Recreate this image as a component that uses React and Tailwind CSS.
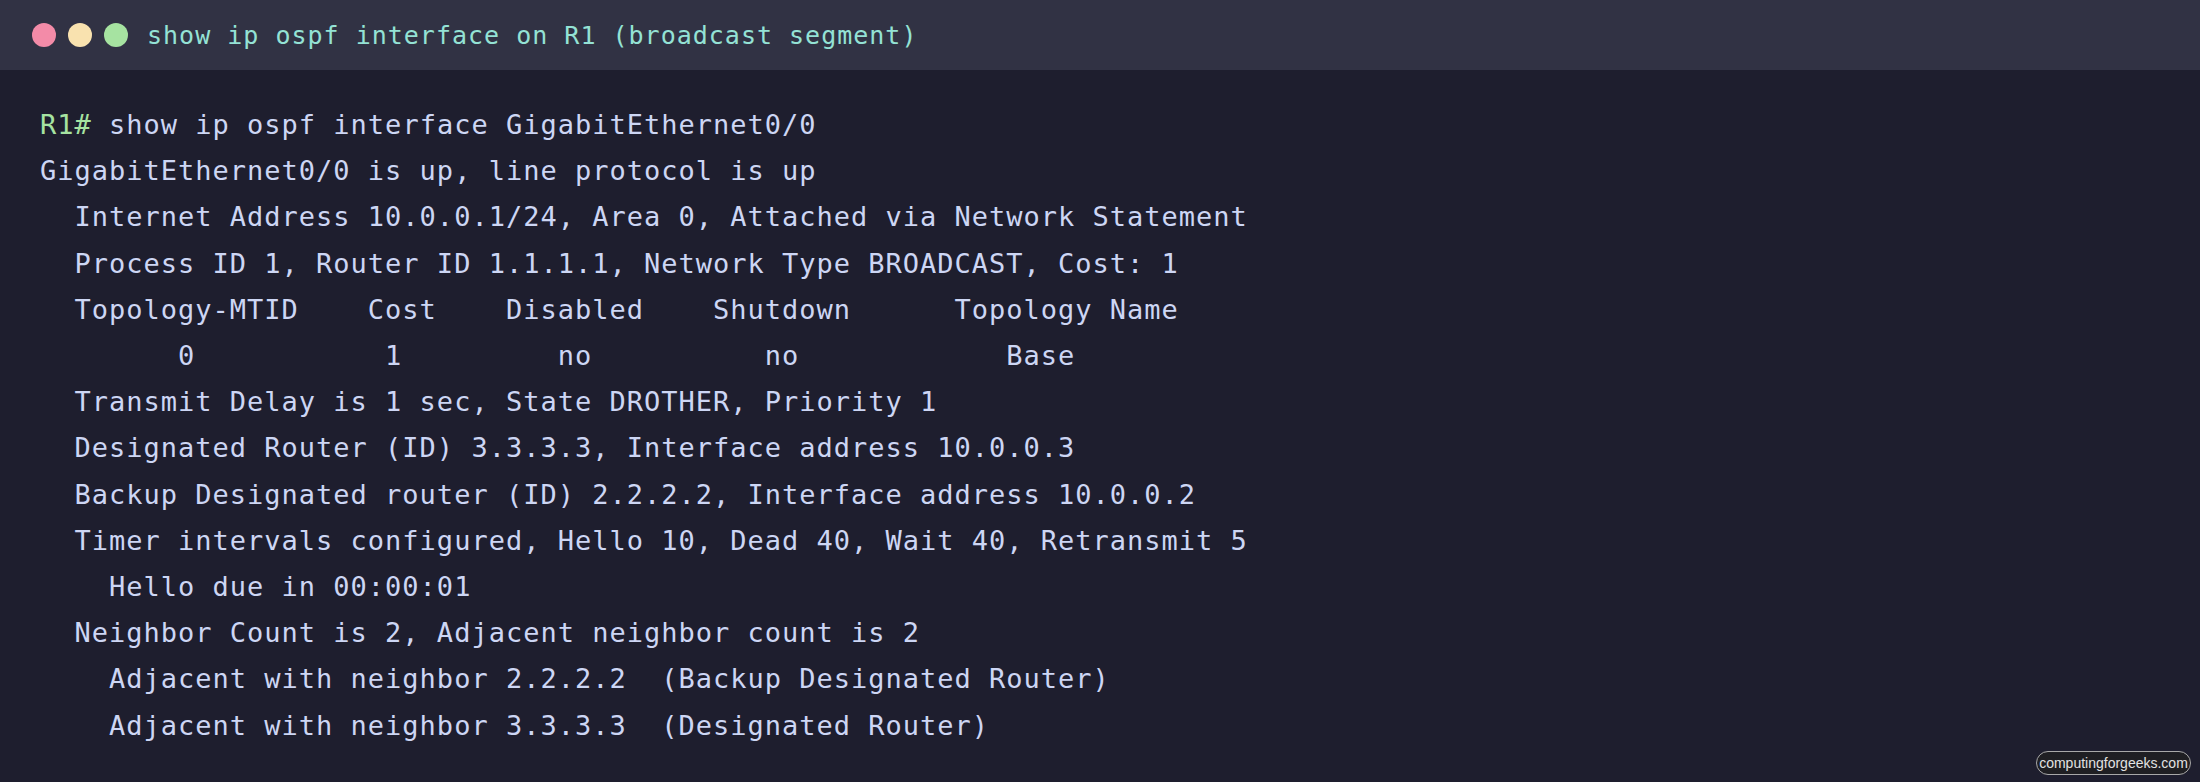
import React from 'react';

const lines = [
  'GigabitEthernet0/0 is up, line protocol is up',
  '  Internet Address 10.0.0.1/24, Area 0, Attached via Network Statement',
  '  Process ID 1, Router ID 1.1.1.1, Network Type BROADCAST, Cost: 1',
  '  Topology-MTID    Cost    Disabled    Shutdown      Topology Name',
  '        0           1         no          no            Base',
  '  Transmit Delay is 1 sec, State DROTHER, Priority 1',
  '  Designated Router (ID) 3.3.3.3, Interface address 10.0.0.3',
  '  Backup Designated router (ID) 2.2.2.2, Interface address 10.0.0.2',
  '  Timer intervals configured, Hello 10, Dead 40, Wait 40, Retransmit 5',
  '    Hello due in 00:00:01',
  '  Neighbor Count is 2, Adjacent neighbor count is 2',
  '    Adjacent with neighbor 2.2.2.2  (Backup Designated Router)',
  '    Adjacent with neighbor 3.3.3.3  (Designated Router)',
];

export default function App() {
  return (
    <div className="relative w-[2200px] h-[782px] bg-[#1e1e2e] overflow-hidden font-['DejaVu_Sans_Mono','Liberation_Mono',monospace]">
      {/* window title bar */}
      <div className="h-[70px] bg-[#313244] flex items-center pl-[32px]">
        <div className="flex items-center gap-[12px]">
          <span className="w-[24px] h-[24px] rounded-full bg-[#f38ba8]"></span>
          <span className="w-[24px] h-[24px] rounded-full bg-[#f9e2af]"></span>
          <span className="w-[24px] h-[24px] rounded-full bg-[#a6e3a1]"></span>
        </div>
        <span className="ml-[19px] text-[25px] tracking-[1px] text-[#94e2d5] leading-none">
          show ip ospf interface on R1 (broadcast segment)
        </span>
      </div>

      {/* terminal output */}
      <div className="pt-[32px] pl-[40px] text-[27px] tracking-[1px] leading-[46.2px] text-[#cdd6f4] whitespace-pre">
        <div>
          <span className="text-[#a6e3a1]">R1#</span> show ip ospf interface GigabitEthernet0/0
        </div>
        {lines.map((l, i) => (
          <div key={i}>{l}</div>
        ))}
      </div>

      {/* site badge */}
      <div className="absolute right-[9px] bottom-[7px] h-[24px] w-[155px] rounded-full border border-[#a8a8a8] bg-[#1f1f23] flex items-center justify-center text-[14px] text-[#e2e2e2] font-['Liberation_Sans',Arial,sans-serif]">
        computingforgeeks.com
      </div>
    </div>
  );
}
